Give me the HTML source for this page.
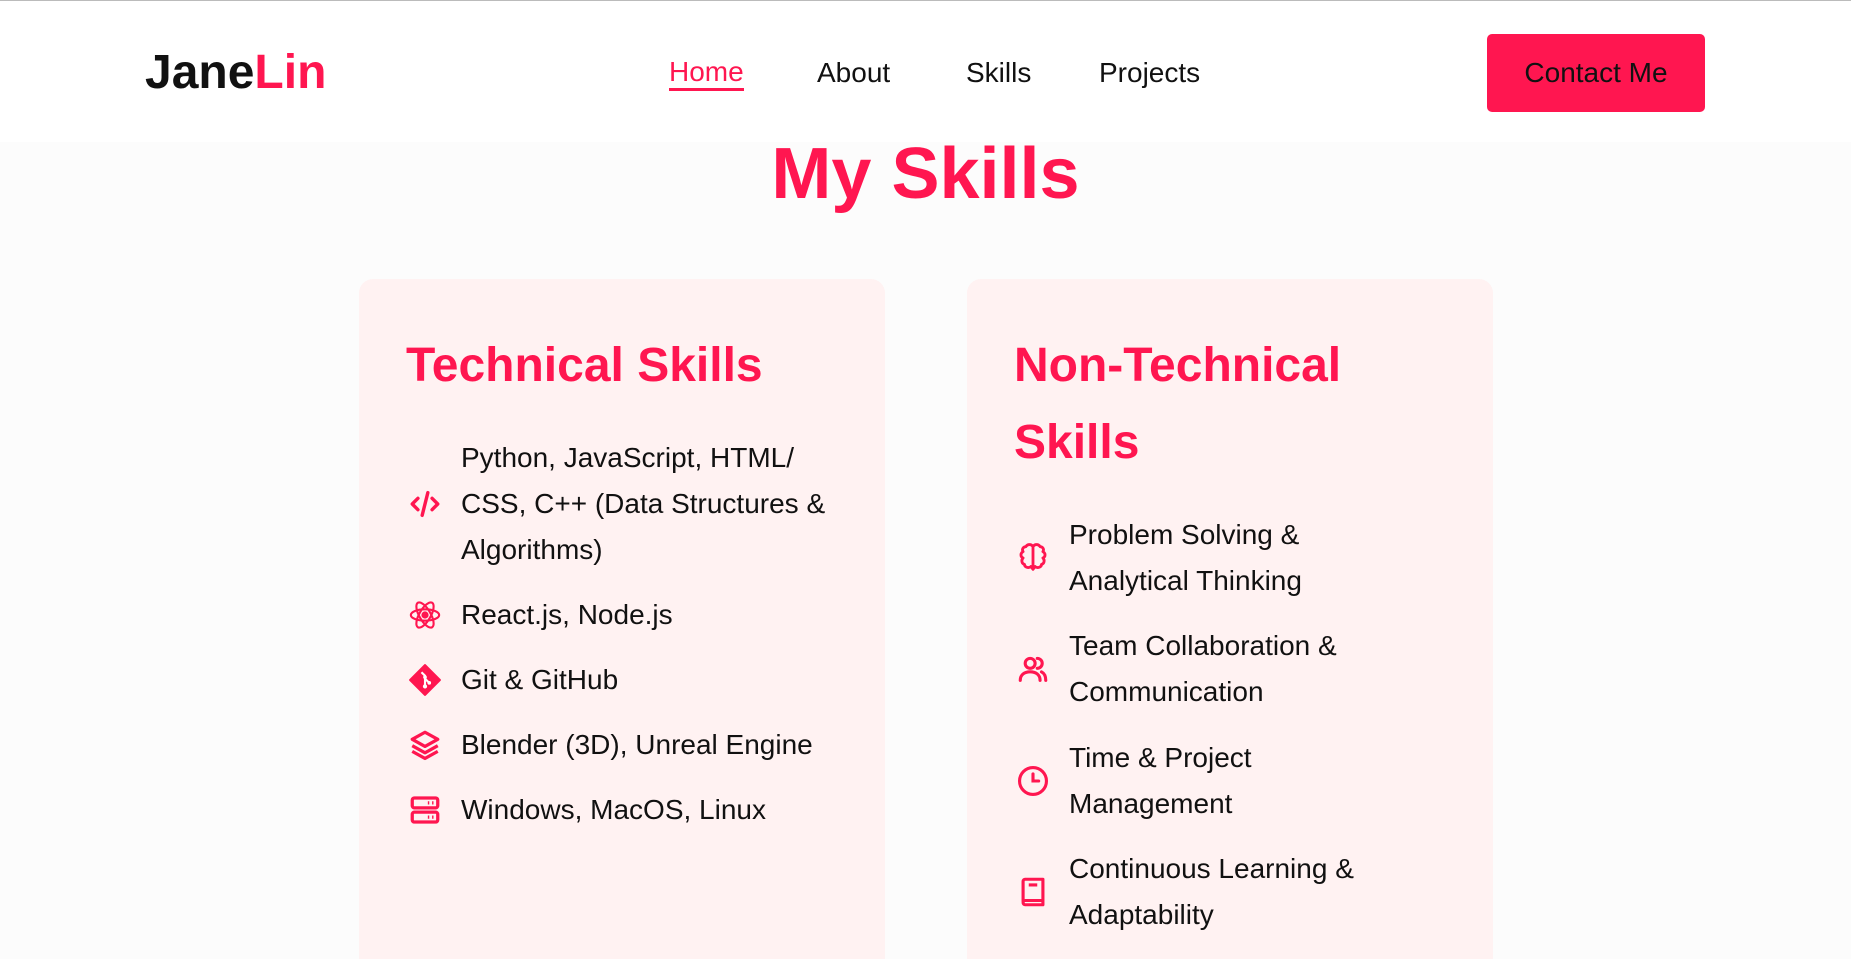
<!DOCTYPE html>
<html style="width:1851px;height:959px;overflow:hidden"><head><meta charset="utf-8"><style>
*{margin:0;padding:0;box-sizing:border-box}
body{width:1851px;height:959px;overflow:hidden;background:#fcfcfc;font-family:"Liberation Sans","Noto Sans CJK SC",sans-serif;color:#111;position:relative}
.hdr{position:absolute;left:0;top:0;width:1851px;height:142px;background:#fff;border-top:1px solid #bbb}
.logo{position:absolute;left:145px;top:42px;font-size:48px;font-weight:bold;line-height:60px;color:#111}
.logo span{color:#ff1650}
.nav a{position:absolute;top:54px;font-size:28px;line-height:36px;color:#111;text-decoration:none}
.nav a.on{color:#ff1650;border-bottom:3px solid #ff1650;line-height:33px}
.btn{position:absolute;left:1487px;top:33px;width:218px;height:78px;background:#ff1650;border-radius:5px;color:#111;font-size:28px;line-height:78px;text-align:center}
h1{position:absolute;left:0;width:1851px;top:132px;text-align:center;color:#ff1650;font-size:72px;line-height:84px;font-weight:bold}
.card{position:absolute;top:279px;width:526px;height:680px;background:#fff2f2;border-radius:14px 14px 0 0}
.item{position:absolute;left:102px;font-size:28px;line-height:46px;white-space:nowrap}
.ic{position:absolute;left:49px;width:34px;height:34px}
</style></head><body>
<div class="hdr">
<div class="logo">Jane<span>Lin</span></div>
<div class="nav">
<a class="on" style="left:669px">Home</a>
<a style="left:817px">About</a>
<a style="left:966px">Skills</a>
<a style="left:1099px">Projects</a>
</div>
<div class="btn">Contact Me</div>
</div>
<h1>My Skills</h1>

<div class="card" style="left:359px">
<div style="position:absolute;left:47px;top:48px;color:#ff1650;font-size:48px;line-height:77px;font-weight:bold">Technical Skills</div>
<div class="item" style="top:156px">Python, JavaScript, HTML/<br>CSS, C++ (Data Structures &amp;<br>Algorithms)</div>
<svg class="ic" style="top:208px" viewBox="0 0 24 24" fill="none" stroke="#ff1650" stroke-width="2.4" stroke-linecap="round" stroke-linejoin="round"><path d="M7 8l-4 4 4 4M17 8l4 4-4 4M14 4l-4 16"/></svg>
<div class="item" style="top:313px">React.js, Node.js</div>
<svg class="ic" style="top:319px" viewBox="0 0 24 24" fill="none" stroke="#ff1650" stroke-width="1.5"><ellipse cx="12" cy="12" rx="10" ry="4"/><ellipse cx="12" cy="12" rx="10" ry="4" transform="rotate(60 12 12)"/><ellipse cx="12" cy="12" rx="10" ry="4" transform="rotate(120 12 12)"/><circle cx="12" cy="12" r="1.8" fill="#ff1650"/></svg>
<div class="item" style="top:378px">Git &amp; GitHub</div>
<svg class="ic" style="top:384px" viewBox="0 0 24 24"><path d="M12 1.5L22.5 12 12 22.5 1.5 12z" fill="#ff1650" stroke="#ff1650" stroke-width="1.5" stroke-linejoin="round"/><path d="M9.5 6.5L12 9v7M12 11l3 3" stroke="#fff" stroke-width="1.5" fill="none"/><circle cx="12" cy="16.5" r="1.5" fill="#fff"/><circle cx="15" cy="14" r="1.3" fill="#fff"/><circle cx="12" cy="10" r="1.3" fill="#fff"/></svg>
<div class="item" style="top:443px">Blender (3D), Unreal Engine</div>
<svg class="ic" style="top:449px" viewBox="0 0 24 24" fill="none" stroke="#ff1650" stroke-width="2.3" stroke-linejoin="round"><path d="M12 3L3 8l9 5 9-5z"/><path d="M3 12.5l9 5 9-5M3 16.5l9 5 9-5"/></svg>
<div class="item" style="top:508px">Windows, MacOS, Linux</div>
<svg class="ic" style="top:514px" viewBox="0 0 24 24" fill="none" stroke="#ff1650" stroke-width="2.3"><rect x="3" y="3.5" width="18" height="7" rx="1.5"/><rect x="3" y="13.5" width="18" height="7" rx="1.5"/><path d="M14 7h1M17 7h1M14 17h1M17 17h1"/></svg>
</div>

<div class="card" style="left:967px">
<div style="position:absolute;left:47px;top:48px;color:#ff1650;font-size:48px;line-height:77px;font-weight:bold">Non-Technical<br>Skills</div>
<div class="item" style="top:233px">Problem Solving &amp;<br>Analytical Thinking</div>
<svg class="ic" style="top:262px" viewBox="0 0 24 24" fill="none" stroke="#ff1650" stroke-width="2" stroke-linejoin="round"><path d="M12 4c-1-2-4-2-5 0-2 0-3 2-2 3.5-2 1-2 3.5 0 4.5-1.5 1.5-1 4 1 4.5 0 2 3 3 4.5 1.5L12 20V4zM12 4c1-2 4-2 5 0 2 0 3 2 2 3.5 2 1 2 3.5 0 4.5 1.5 1.5 1 4-1 4.5 0 2-3 3-4.5 1.5L12 20"/></svg>
<div class="item" style="top:344px">Team Collaboration &amp;<br>Communication</div>
<svg class="ic" style="top:373px" viewBox="0 0 24 24" fill="none" stroke="#ff1650" stroke-width="2.2" stroke-linecap="round"><circle cx="10" cy="8" r="3.5"/><path d="M3 20c0-4 3-6 7-6s7 2 7 6M15 4.5a3.5 3.5 0 0 1 0 7M18 14c2 1 3 3 3 6"/></svg>
<div class="item" style="top:456px">Time &amp; Project<br>Management</div>
<svg class="ic" style="top:485px" viewBox="0 0 24 24" fill="none" stroke="#ff1650" stroke-width="2.2" stroke-linecap="round"><circle cx="12" cy="12" r="9.5"/><path d="M12 7v5h4"/></svg>
<div class="item" style="top:567px">Continuous Learning &amp;<br>Adaptability</div>
<svg class="ic" style="top:596px" viewBox="0 0 24 24" fill="none" stroke="#ff1650" stroke-width="2.2" stroke-linejoin="round"><path d="M5 19V4.5A1.5 1.5 0 0 1 6.5 3H19v15H6.5A1.5 1.5 0 0 0 5 19.5 1.5 1.5 0 0 0 6.5 21H19v-3M9 7h6"/></svg>
</div>
</body></html>
